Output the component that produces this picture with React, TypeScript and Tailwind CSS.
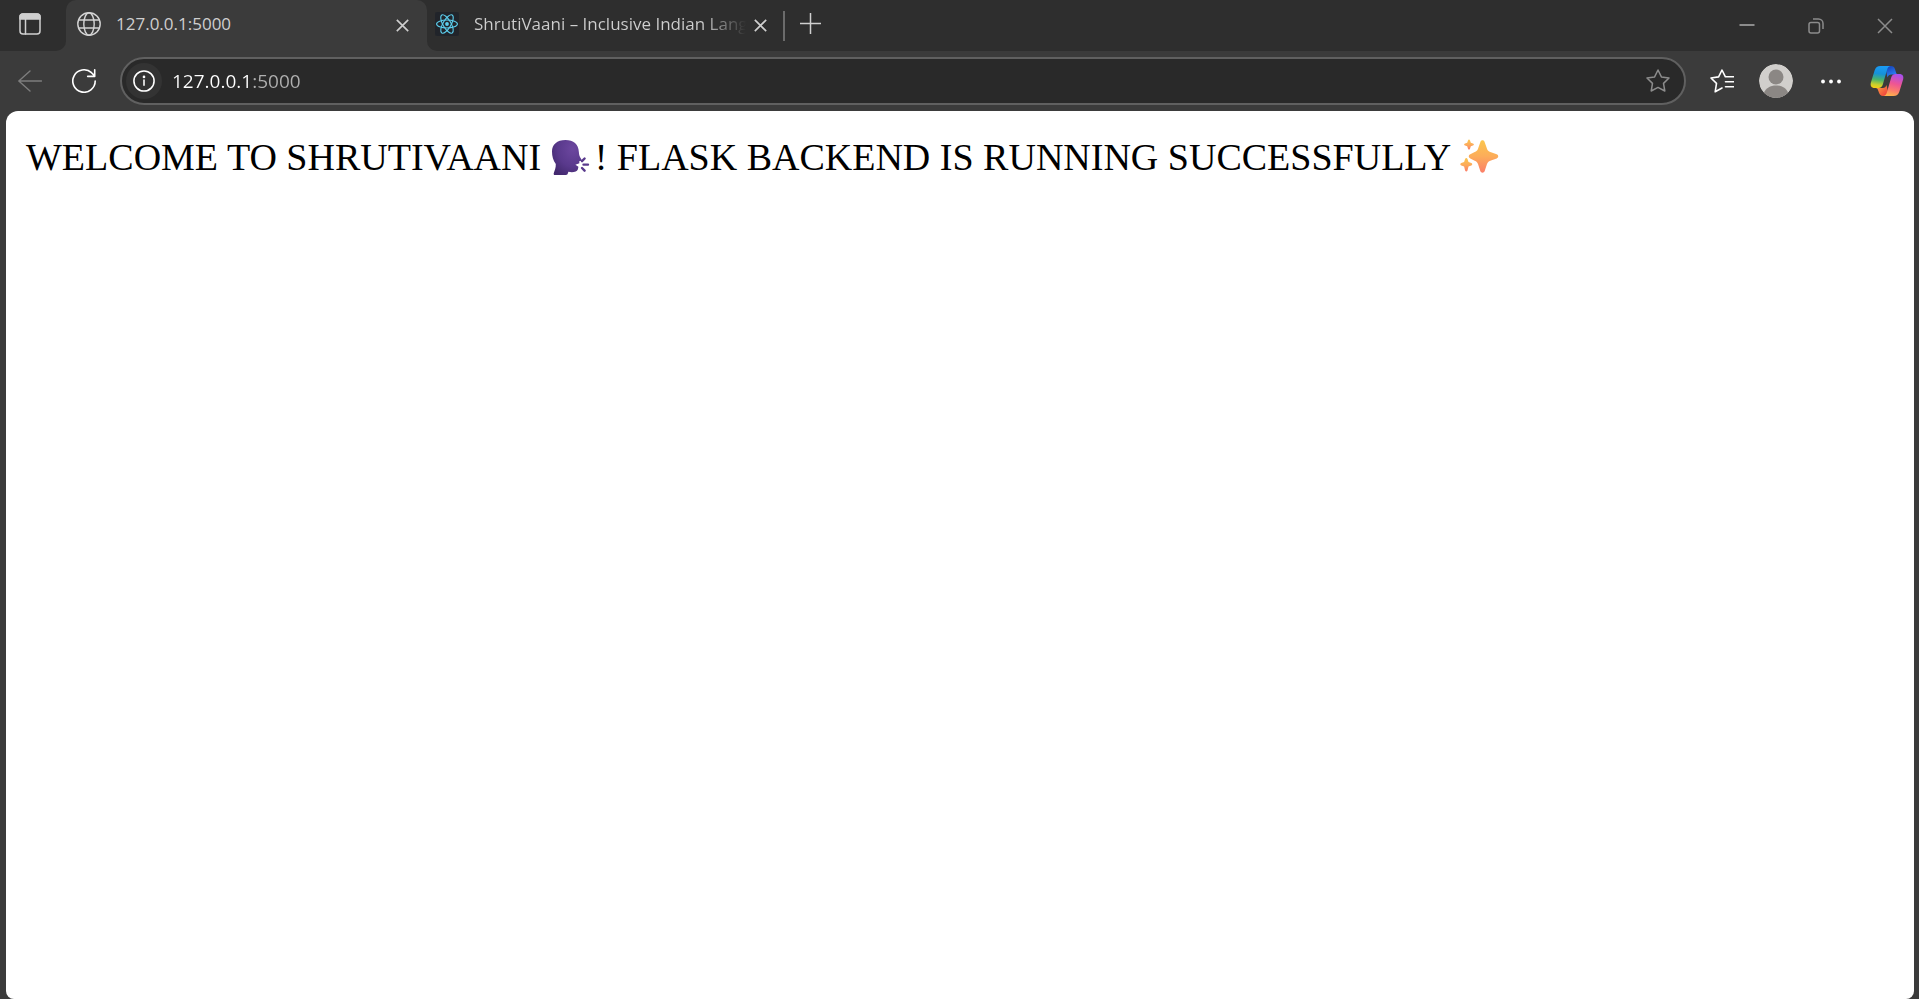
import type { ReactNode } from "react";

function LineIcon({ className, children, width = 1.5 }: { className: string; children: ReactNode; width?: number }) {
  return (
    <svg
      viewBox="0 0 24 24"
      className={className}
      fill="none"
      stroke="currentColor"
      strokeWidth={width}
      strokeLinecap="round"
      strokeLinejoin="round"
      aria-hidden="true"
    >
      {children}
    </svg>
  );
}

function WorkspaceIcon() {
  return (
    <LineIcon className="size-6">
      <rect x="2" y="2" width="20" height="20" rx="3" />
      <path d="M2 7V5a3 3 0 0 1 3-3h14a3 3 0 0 1 3 3v2z" fill="currentColor" />
      <path d="M7.5 7v15" />
    </LineIcon>
  );
}

function GlobeIcon() {
  return (
    <LineIcon className="size-6 shrink-0 text-[#d4d4d4]" width={1.4}>
      <circle cx="12" cy="12" r="11.2" />
      <ellipse cx="12" cy="12" rx="5.2" ry="11.2" />
      <path d="M1.8 8h20.4M1.8 16h20.4" />
    </LineIcon>
  );
}

function ReactFavicon() {
  return (
    <svg viewBox="0 0 24 24" className="size-6 shrink-0" aria-hidden="true">
      <rect width="24" height="24" rx="2" fill="#20232a" fillOpacity="0.9" />
      <circle cx="12" cy="12" r="1.9" fill="#5ccfee" />
      <g fill="none" stroke="#5ccfee" strokeWidth="1.1">
        <ellipse cx="12" cy="12" rx="10.4" ry="4" />
        <ellipse cx="12" cy="12" rx="10.4" ry="4" transform="rotate(60 12 12)" />
        <ellipse cx="12" cy="12" rx="10.4" ry="4" transform="rotate(120 12 12)" />
      </g>
    </svg>
  );
}

function CrossIcon({ className, width = 1.5 }: { className: string; width?: number }) {
  return (
    <svg viewBox="0 0 16 16" className={className} fill="none" stroke="currentColor" strokeWidth={width} aria-hidden="true">
      <path d="M1 1l14 14M15 1L1 15" />
    </svg>
  );
}

function CopilotIcon() {
  return (
    <svg viewBox="0 0 34 32" className="h-8 w-[34px]" aria-hidden="true">
      <defs>
        <linearGradient id="coolRibbon" x1="10" y1="1" x2="7" y2="23" gradientUnits="userSpaceOnUse">
          <stop offset="0" stopColor="#1a9bf5" />
          <stop offset="0.35" stopColor="#1691d8" />
          <stop offset="0.62" stopColor="#4bb36a" />
          <stop offset="0.85" stopColor="#c9cf2d" />
          <stop offset="1" stopColor="#f5cf16" />
        </linearGradient>
        <linearGradient id="warmRibbon" x1="28" y1="9" x2="22" y2="31" gradientUnits="userSpaceOnUse">
          <stop offset="0" stopColor="#a64ff0" />
          <stop offset="0.45" stopColor="#ee5594" />
          <stop offset="0.75" stopColor="#fb7b6d" />
          <stop offset="1" stopColor="#fdb04e" />
        </linearGradient>
        <linearGradient id="blueFold" x1="19" y1="1" x2="23" y2="10" gradientUnits="userSpaceOnUse">
          <stop offset="0" stopColor="#1743b8" />
          <stop offset="1" stopColor="#2b7df2" />
        </linearGradient>
        <linearGradient id="redFold" x1="8" y1="23" x2="16" y2="31" gradientUnits="userSpaceOnUse">
          <stop offset="0" stopColor="#fb9040" />
          <stop offset="1" stopColor="#ee3d3d" />
        </linearGradient>
      </defs>
      <path d="M15 1h6c2.300 0 3.300 1.200 4 3.200l1.100 3.500c.4 1.100 1 1.600 2.200 1.800h-7c-2 0-3.200 1-3.800 3z" fill="url(#blueFold)" />
      <path d="M19 31h-6c-2.300 0-3.300-1.200-4-3.200l-1.100-3c-.4-1.100-1-1.600-2.200-1.800h7c2 0 3.200-1 3.800-3z" fill="url(#redFold)" />
      <path d="M10.500 1h10c-2 .4-2.900 1.800-3.500 4l-4.200 14.500c-.7 2.300-1.900 3.500-4.300 3.500H4.600C1.500 23 0 20.900.9 17.500L4.600 5.500C5.600 2.300 7.400 1 10.500 1z" fill="url(#coolRibbon)" />
      <path d="M23.500 31h-10c2-.4 2.900-1.800 3.500-4l4.200-14.500c.7-2.300 1.900-3.500 4.300-3.500h3.900c3.100 0 4.600 2.100 3.700 5.500l-3.700 12c-1 3.200-2.800 4.500-5.900 4.500z" fill="url(#warmRibbon)" />
    </svg>
  );
}

function SpeakingHead() {
  return (
    <svg viewBox="0 0 40 40" className="mr-1 inline-block size-10 align-[-8px]" role="img" aria-label="Speaking head">
      <defs>
        <radialGradient id="headShade" cx="0.7" cy="0.25" r="0.85">
          <stop offset="0" stopColor="#6c479f" />
          <stop offset="0.6" stopColor="#59398c" />
          <stop offset="1" stopColor="#43296f" />
        </radialGradient>
      </defs>
      <path
        d="M14.500 2C6 2 1 6.500 1 13.500c0 5 1.200 9 3.800 12.500C5 30 3.500 32.500 2.700 35.500c-.2.900.2 1.500 1.100 1.500H15c1 0 1.500-.4 1.800-1.400l.6-1.900c2.500.6 5 .6 7.300-.2 2.100-.8 2.400-2.500 2.700-4.700l-3-2 4-1.500-.2-2 2.300-.5c.5-.7.1-1.300-.6-2.300-1.400-2.200-1.900-4-2-6.300C27.500 6 22.500 2 14.500 2z"
        fill="url(#headShade)"
      />
      <path d="M31 23.200l2.600-2.700M32.500 26.600h4.500M31 30l2.600 2.700" stroke="#59398c" strokeWidth="2.400" strokeLinecap="round" />
    </svg>
  );
}

function Sparkles() {
  return (
    <svg viewBox="0 0 40 40" className="inline-block size-10 align-[-8px]" role="img" aria-label="Sparkles">
      <defs>
        <linearGradient id="sparkleShade" x1="0" y1="0" x2="0" y2="1">
          <stop offset="0" stopColor="#fbc64d" />
          <stop offset="0.5" stopColor="#fcac5a" />
          <stop offset="1" stopColor="#fb7e68" />
        </linearGradient>
      </defs>
      <g fill="url(#sparkleShade)">
        <path d="M21.300 4.200c.8-2.500 3.600-2.500 4.400 0l2.300 6.500c.6 1.700 1.600 2.700 3.300 3.300l6.400 2.300c2.100.8 2.100 3.300 0 4.100L31.300 22.700c-1.700.6-2.700 1.600-3.300 3.300l-2.300 7c-.8 2.300-3.600 2.300-4.400 0L19 26c-.6-1.700-1.600-2.700-3.300-3.300l-4.400-2.300c-2.100-.8-2.100-3.300 0-4.100l4.400-2.300c1.700-.6 2.700-1.600 3.300-3.300z" />
        <path d="M9 2.500c.4-1.300 1.600-1.300 2 0l.8 2.200 2.200.8c1.200.4 1.200 1.600 0 2l-2.200.8-.8 2.400c-.4 1.200-1.600 1.200-2 0l-.8-2.400L6 7.500c-1.200-.4-1.200-1.600 0-2l2.200-.8z" />
        <path d="M6.100 21c.5-1.400 1.900-1.400 2.400 0l1 3 2.800 1c1.300.5 1.300 1.900 0 2.400l-2.800 1-1 4c-.5 1.400-1.900 1.400-2.400 0l-1-4-2.800-1c-1.300-.5-1.300-1.900 0-2.400l2.800-1z" />
      </g>
    </svg>
  );
}

function TabStrip() {
  return (
    <header className="flex h-[51px] shrink-0 bg-[#3b3b3b]">
      <div className="flex w-[66px] items-start rounded-br-[10px] bg-[#2e2e2e] pt-3 pl-[18px] text-[#cfcfcf]">
        <button type="button" aria-label="Tab actions">
          <WorkspaceIcon />
        </button>
      </div>
      <div className="w-[361px] bg-[#2e2e2e]">
        <div className="flex h-full items-start rounded-t-[10px] bg-[#3b3b3b] pt-3 pr-[18px] pl-[11px]">
          <GlobeIcon />
          <span className="ml-[15px] flex-1 text-[17px] leading-6 text-[#cfcfcf]">127.0.0.1:5000</span>
          <button type="button" aria-label="Close tab" className="flex h-[26px] items-center text-[#cfcfcf]">
            <CrossIcon className="size-[13px]" width={2} />
          </button>
        </div>
      </div>
      <div className="flex min-w-0 flex-1 items-start rounded-bl-[10px] bg-[#2e2e2e] pl-2">
        <div className="flex w-[333px] items-start pt-3 text-[#cfcfcf]">
          <ReactFavicon />
          <span className="ml-[15px] w-[280px] bg-[linear-gradient(90deg,#cfcfcf_228px,#2e2e2e_272px)] bg-clip-text text-[17px] leading-6 whitespace-nowrap text-transparent">
            ShrutiVaani – Inclusive Indian Lang
          </span>
          <button type="button" aria-label="Close tab" className="flex h-[26px] items-center">
            <CrossIcon className="size-[13px]" width={2} />
          </button>
        </div>
        <div className="mt-[11px] ml-[15px] h-[30px] w-0.5 bg-[#6b6b6b]" />
        <button type="button" aria-label="New tab" className="mt-[13px] ml-[15px] text-[#cfcfcf]">
          <svg viewBox="0 0 21 21" className="size-[21px]" stroke="currentColor" strokeWidth="1.500" aria-hidden="true">
            <path d="M10.500 0v21M0 10.500h21" />
          </svg>
        </button>
        <div className="ml-auto flex h-full text-[#8c8c8c]">
          <button type="button" aria-label="Minimize" className="flex w-[69px] justify-center pt-[18px]">
            <svg viewBox="0 0 16 16" className="size-4" stroke="currentColor" strokeWidth="2" aria-hidden="true">
              <path d="M.5 7h15" />
            </svg>
          </button>
          <button type="button" aria-label="Restore" className="flex w-[69px] justify-center pt-[18px]">
            <svg viewBox="0 0 16 16" className="size-4" fill="none" stroke="currentColor" strokeWidth="1.500" aria-hidden="true">
              <rect x="1" y="4.500" width="10.500" height="10.500" rx="2" />
              <path d="M5 1h5.500A4.500 4.500 0 0 1 15 5.500V11" />
            </svg>
          </button>
          <button type="button" aria-label="Close window" className="flex w-[69px] justify-center pt-[18px]">
            <CrossIcon className="size-4" />
          </button>
        </div>
      </div>
    </header>
  );
}

function Toolbar() {
  return (
    <nav className="flex h-[60px] shrink-0 items-center pr-[15px] pl-[18px] text-white">
      <button type="button" aria-label="Back" className="text-[#7d7d7d]">
        <LineIcon className="size-6" width={1.4}>
          <path d="M23.500 12H.8M12 2L.8 12 12 22" />
        </LineIcon>
      </button>
      <button type="button" aria-label="Refresh" className="ml-[30px]">
        <LineIcon className="size-6" width={1.6}>
          <path d="M23.200 12A11.200 11.200 0 1 1 19.500 3.700L22.700 6.900M22.700.8v6.600h-7" />
        </LineIcon>
      </button>
      <div className="ml-6 flex h-12 flex-1 items-center rounded-full border-2 border-[#606060] bg-[#292929] pr-[14px] pl-1">
        <button type="button" aria-label="View site information" className="flex size-9 items-center justify-center rounded-full bg-[#333333]">
          <LineIcon className="size-[22px]" width={1.7}>
            <circle cx="12" cy="12" r="11" />
            <path d="M12 11v5.500" />
            <circle cx="12" cy="7.500" r="0.600" fill="currentColor" />
          </LineIcon>
        </button>
        <input
          type="text"
          aria-label="Address"
          defaultValue="127.0.0.1:5000"
          className="ml-[10px] h-9 min-w-0 flex-1 bg-[linear-gradient(90deg,#ffffff_80px,#b0b0b0_80px)] bg-clip-text text-[19px] text-transparent outline-none"
        />
        <button type="button" aria-label="Add to favorites" className="text-[#8c8c8c]">
          <LineIcon className="size-6">
            <path d="M12 1l3.400 6.900 7.600 1.100-5.500 5.400 1.300 7.600L12 18.400 5.200 22l1.300-7.600L1 9l7.600-1.100z" />
          </LineIcon>
        </button>
      </div>
      <button type="button" aria-label="Favorites" className="ml-6">
        <LineIcon className="size-6" width={1.6}>
          <path d="M23.500 7.800h-8.100L12 1 8.600 7.900 1 9l5.500 5.400L5.200 22.800 12 19M15.500 12.800h8M15.500 17.800h8" />
        </LineIcon>
      </button>
      <button type="button" aria-label="Profile" className="ml-[25px]">
        <svg viewBox="0 0 34 34" className="size-[34px] rounded-full" aria-hidden="true">
          <circle cx="17" cy="17" r="17" fill="#d1cfcc" />
          <circle cx="17" cy="13" r="7.500" fill="#8b8784" />
          <path d="M5 29c1.500-5 6.500-7.500 12-7.500S27.500 24 29 29c-3 3.200-7.300 5-12 5s-9-1.800-12-5z" fill="#8b8784" />
        </svg>
      </button>
      <button type="button" aria-label="Settings and more" className="ml-7">
        <svg viewBox="0 0 20 6" className="h-1.5 w-5" fill="currentColor" aria-hidden="true">
          <circle cx="2" cy="3.500" r="1.900" />
          <circle cx="10" cy="3.500" r="1.900" />
          <circle cx="18" cy="3.500" r="1.900" />
        </svg>
      </button>
      <button type="button" aria-label="Copilot" className="ml-[29px]">
        <CopilotIcon />
      </button>
    </nav>
  );
}

export default function App() {
  return (
    <div className="flex h-screen flex-col overflow-hidden bg-[#3b3b3b] font-['Open_Sans','Noto_Sans',sans-serif]">
      <TabStrip />
      <Toolbar />
      <main className="mr-[5px] ml-1.5 flex-1 rounded-t-xl rounded-b-lg bg-white p-5">
        <p className="font-['Liberation_Serif',serif] text-[38px] leading-[52px] text-black">
          WELCOME TO SHRUTIVAANI <SpeakingHead />! FLASK BACKEND IS RUNNING SUCCESSFULLY <Sparkles />
        </p>
      </main>
    </div>
  );
}
